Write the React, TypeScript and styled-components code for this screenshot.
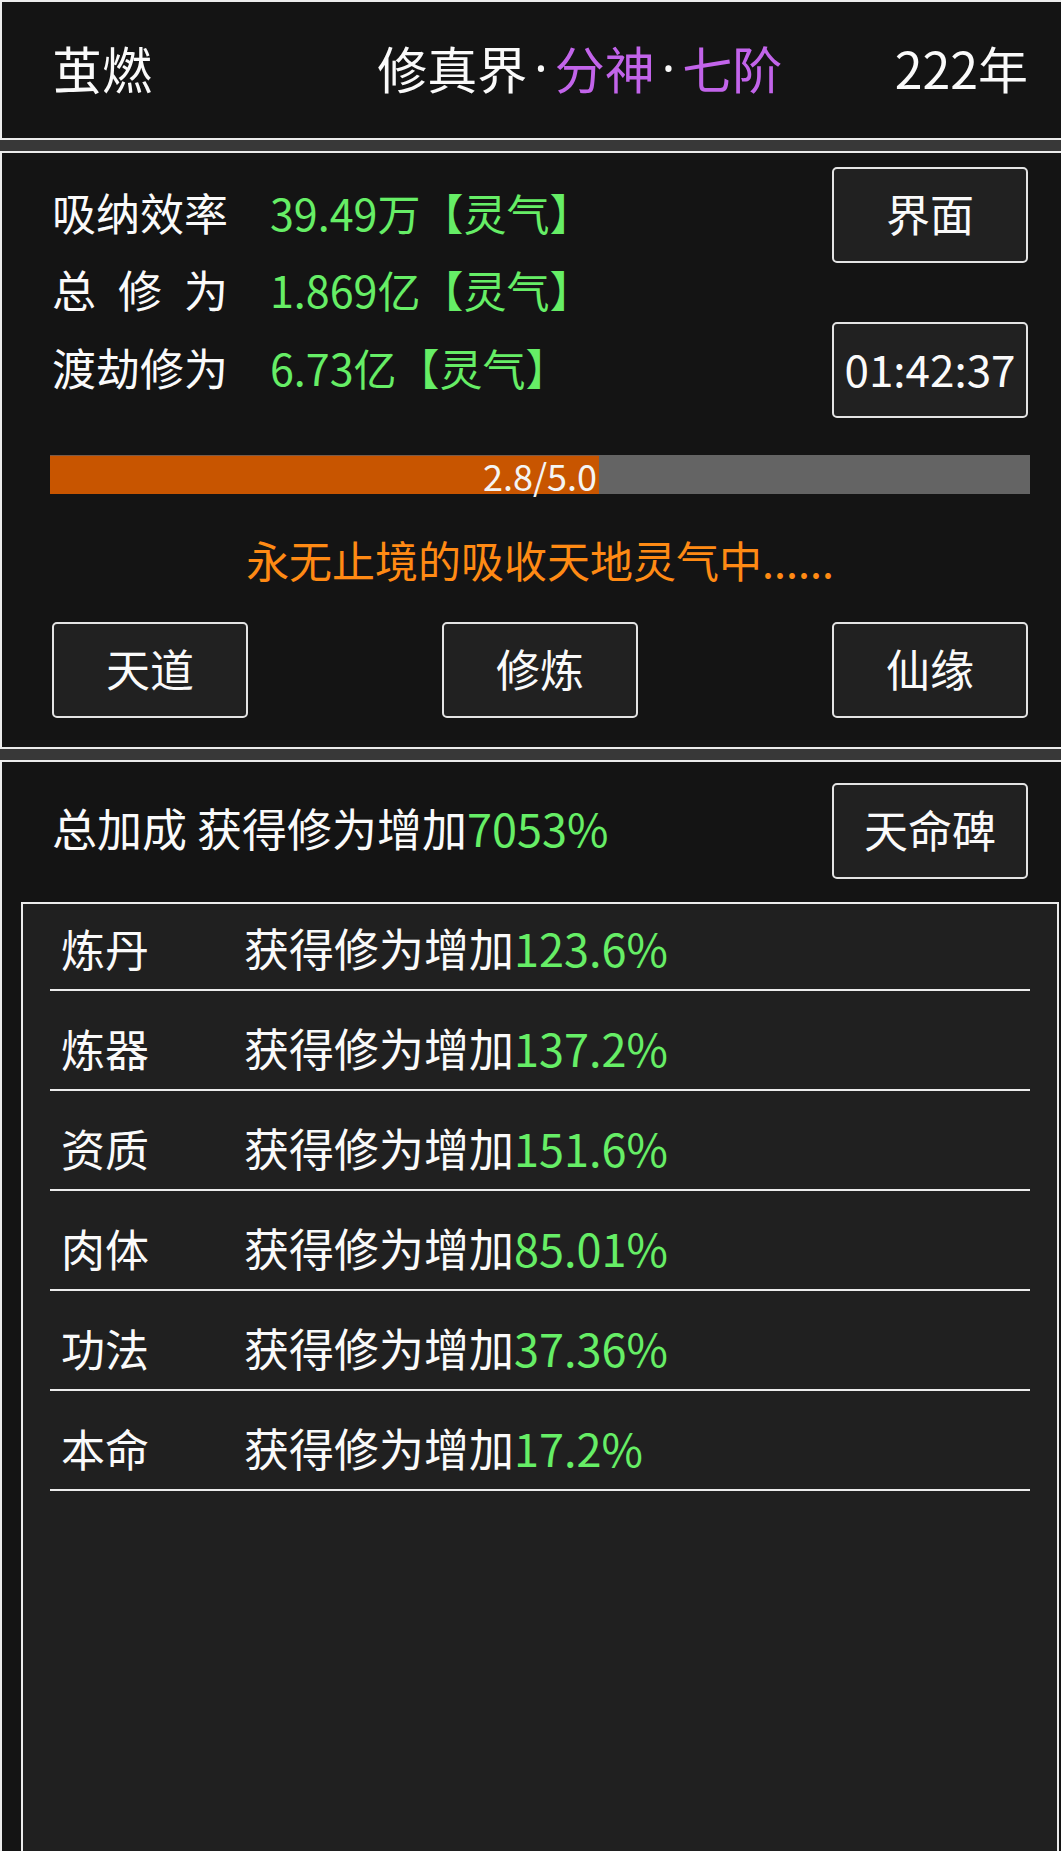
import styled, { createGlobalStyle } from 'styled-components';

const GlobalStyle = createGlobalStyle`
  html, body {
    margin: 0;
    padding: 0;
    background: #383838;
  }
  body {
    font-family: "Noto Sans CJK SC", "Noto Sans", sans-serif;
    color: #fafafa;
  }
  * {
    box-sizing: border-box;
  }
`;

const Page = styled.div`
  width: 1061px;
  height: 1851px;
  overflow: hidden;
  background: #383838;
  display: flex;
  flex-direction: column;
  gap: 11px;
`;

const Panel = styled.section<{ $open?: boolean }>`
  width: 1080px;
  flex-shrink: 0;
  background: #141414;
  border: 2px solid #ececec;
  border-bottom: ${({ $open }) => ($open ? 'none' : '2px solid #ececec')};
`;

const TopBar = styled(Panel)`
  height: 140px;
  padding: 0 50px 6px;
  display: grid;
  grid-template-columns: repeat(3, minmax(0, 1fr));
  align-items: center;
  font-size: 50px;
  white-space: nowrap;
`;

const Realm = styled.div`
  display: flex;
  align-items: center;
`;

const Purple = styled.span`
  color: #c264ea;
`;

const Dot = styled.span`
  font-family: "Noto Sans", sans-serif;
  margin: 0 7px;
  vertical-align: 3px;
`;

const Year = styled.div`
  justify-self: end;
`;

const MainPanel = styled(Panel)`
  padding: 14px 50px 29px;
`;

const Stats = styled.div`
  display: flex;
  align-items: center;
  justify-content: space-between;
`;

const StatList = styled.div`
  display: flex;
  flex-direction: column;
`;

const StatRow = styled.div`
  height: 77.5px;
  padding-bottom: 7px;
  display: flex;
  align-items: center;
  font-size: 44px;
  white-space: nowrap;
`;

const StatLabel = styled.span`
  display: inline-block;
  width: 176px;
  margin-right: 42px;
  text-align: justify;
  text-align-last: justify;
`;

const Green = styled.span`
  color: #66ee66;
`;

const StatValue = styled(Green)`
  font-size: 43px;
`;

const SideButtons = styled.div`
  display: flex;
  flex-direction: column;
  gap: 59px;
`;

const Button = styled.button`
  width: 196px;
  height: 96px;
  padding: 0 0 5px;
  border: 2px solid #e4e4e4;
  border-radius: 5px;
  background: #212121;
  color: #fafafa;
  font-family: inherit;
  font-size: 44px;
  display: flex;
  align-items: center;
  justify-content: center;
  white-space: nowrap;
`;

const Bar = styled.div`
  position: relative;
  height: 39px;
  margin: 37px -2px 0;
  background: #646464;
  display: flex;
  align-items: center;
  justify-content: center;
`;

const BarFill = styled.div`
  position: absolute;
  left: 0;
  top: 0;
  bottom: 0;
  background: #c85500;
  box-shadow: inset 0 1px 0 #7a5a48;
`;

const BarText = styled.span`
  position: relative;
  font-size: 36px;
  line-height: 1;
  color: #f4f4f4;
`;

const Status = styled.div`
  margin-top: 33px;
  line-height: 64px;
  font-size: 43px;
  text-align: center;
  color: #ff8a14;
`;

const Actions = styled.div`
  margin-top: 31px;
  display: flex;
  justify-content: space-between;
`;

const BonusPanel = styled(Panel)`
  flex: 1;
  padding: 21px 19px 0;
  display: flex;
  flex-direction: column;
`;

const BonusHead = styled.div`
  padding: 0 31px;
  display: flex;
  align-items: center;
  justify-content: space-between;
  font-size: 45px;
  white-space: nowrap;
`;

const BonusTotal = styled.span`
  padding-bottom: 7px;
`;

const BonusList = styled.div`
  flex: 1;
  margin-top: 23px;
  padding: 9px 27px 0;
  background: #202020;
  border: 2px solid #ececec;
  border-bottom: none;
`;

const BonusRow = styled.div`
  height: 78px;
  padding: 0 0 7px 11px;
  border-bottom: 2px solid #ececec;
  display: flex;
  align-items: center;
  font-size: 45px;
  white-space: nowrap;

  & + & {
    margin-top: 22px;
  }
`;

const BonusName = styled.span`
  width: 183px;
  font-size: 44px;
`;

const stats = [
  { label: '吸纳效率', value: '39.49万【灵气】' },
  { label: '总修为', value: '1.869亿【灵气】' },
  { label: '渡劫修为', value: '6.73亿【灵气】' },
];

const bonuses = [
  { name: '炼丹', value: '123.6%' },
  { name: '炼器', value: '137.2%' },
  { name: '资质', value: '151.6%' },
  { name: '肉体', value: '85.01%' },
  { name: '功法', value: '37.36%' },
  { name: '本命', value: '17.2%' },
];

const progress = { current: 2.8, max: 5.0 };

export default function App() {
  const pct = (progress.current / progress.max) * 100;

  return (
    <>
      <GlobalStyle />
      <Page>
        <TopBar>
          <div>茧燃</div>
          <Realm>
            修真界<Dot>·</Dot>
            <Purple>分神</Purple>
            <Dot>·</Dot>
            <Purple>七阶</Purple>
          </Realm>
          <Year>222年</Year>
        </TopBar>

        <MainPanel>
          <Stats>
            <StatList>
              {stats.map((s) => (
                <StatRow key={s.label}>
                  <StatLabel>{s.label}</StatLabel>
                  <StatValue>{s.value}</StatValue>
                </StatRow>
              ))}
            </StatList>
            <SideButtons>
              <Button>界面</Button>
              <Button>01:42:37</Button>
            </SideButtons>
          </Stats>

          <Bar>
            <BarFill style={{ width: `${pct}%` }} />
            <BarText>
              {progress.current.toFixed(1)}/{progress.max.toFixed(1)}
            </BarText>
          </Bar>

          <Status>永无止境的吸收天地灵气中......</Status>

          <Actions>
            <Button>天道</Button>
            <Button>修炼</Button>
            <Button>仙缘</Button>
          </Actions>
        </MainPanel>

        <BonusPanel $open>
          <BonusHead>
            <BonusTotal>
              总加成 获得修为增加<Green>7053%</Green>
            </BonusTotal>
            <Button>天命碑</Button>
          </BonusHead>
          <BonusList>
            {bonuses.map((b) => (
              <BonusRow key={b.name}>
                <BonusName>{b.name}</BonusName>
                <span>
                  获得修为增加<Green>{b.value}</Green>
                </span>
              </BonusRow>
            ))}
          </BonusList>
        </BonusPanel>
      </Page>
    </>
  );
}
